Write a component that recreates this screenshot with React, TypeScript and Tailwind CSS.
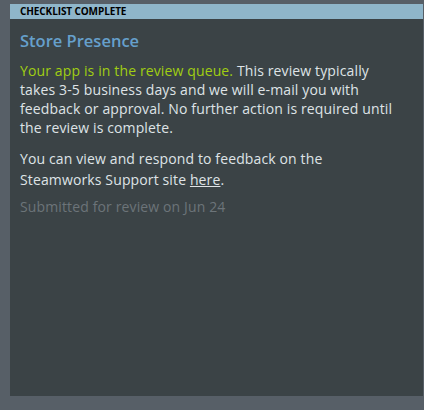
export default function App() {
  return (
    <div className="h-[410px] w-[424px] bg-[#575f67] pt-[4px] pl-[10px] pr-[1px] pb-[14px]" style={{ fontFamily: '"Open Sans", sans-serif' }}>
      <div className="flex h-full flex-col bg-[#3b4346]">
        <div className="h-[15px] bg-[#8fb6ca] pl-[10px] text-[10px] font-bold leading-[15px] tracking-[-0.1px] text-black uppercase">
          Checklist Complete
        </div>
        <div className="pt-[11px] pr-[26px] pl-[10px] text-[14px] leading-[19px] tracking-[0.13px]">
          <h2 className="text-[16.5px] font-semibold leading-[22px] tracking-normal text-[#66a0cc]">Store Presence</h2>
          <p className="mt-[9px] text-[#dfe3e6]">
            <span className="text-[#a0ce12]">Your app is in the review queue.</span> This review typically takes 3-5 business days and we will e-mail you with feedback or approval. No further action is required until the review is complete.
          </p>
          <p className="mt-[11px] leading-[21px] text-[#dfe3e6]">
            You can view and respond to feedback on the Steamworks Support site <a className="underline">here</a>.
          </p>
          <p className="mt-[7px] text-[#6c7479]">Submitted for review on Jun 24</p>
        </div>
      </div>
    </div>
  );
}
